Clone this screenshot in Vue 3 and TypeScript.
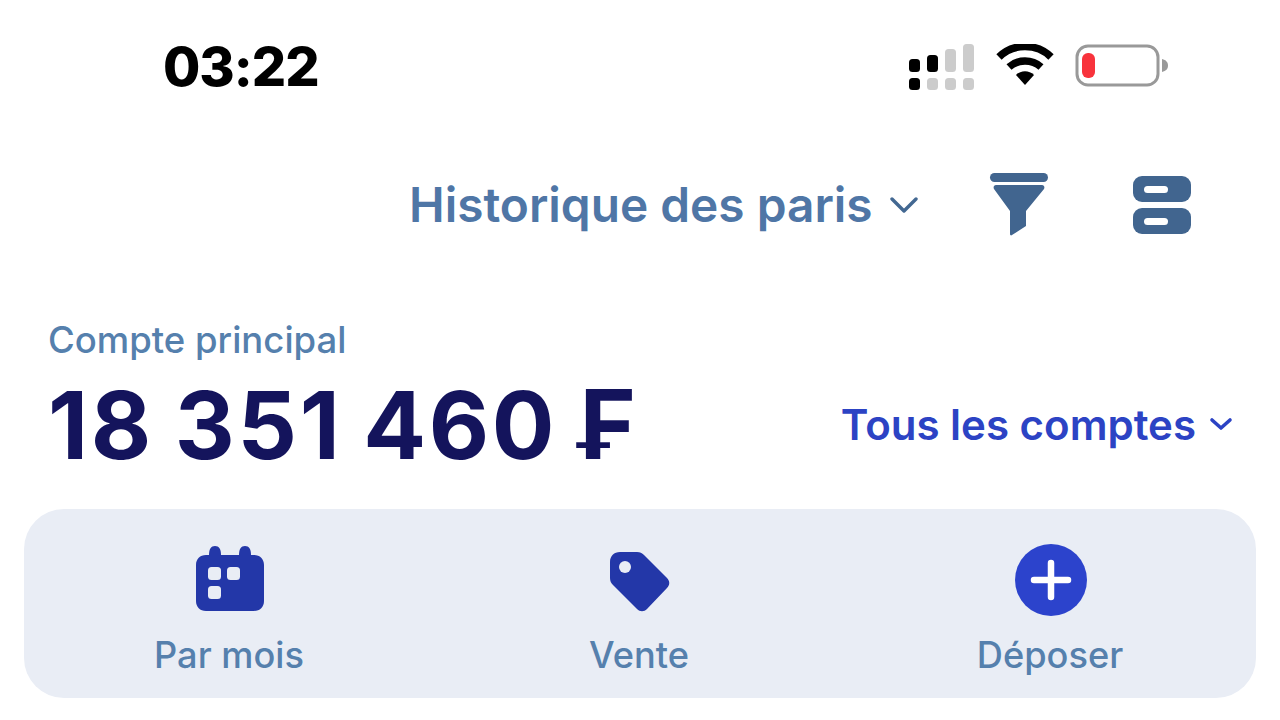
<template>
  <div class="screen">
    <header class="status-bar">
      <span class="clock">03:22</span>
      <div class="status-icons">
        <svg class="signal" width="66" height="46" viewBox="0 0 66 46">
          <rect x="1" y="15" width="11" height="13" rx="3.5" fill="#000" />
          <rect x="1" y="34" width="11" height="12" rx="3.5" fill="#000" />
          <rect x="19" y="11" width="11" height="17" rx="3.5" fill="#000" />
          <rect x="19" y="34" width="11" height="12" rx="3.5" fill="#ccc" />
          <rect x="37" y="5" width="11" height="23" rx="3.5" fill="#ccc" />
          <rect x="37" y="34" width="11" height="12" rx="3.5" fill="#ccc" />
          <rect x="55" y="0" width="11" height="28" rx="3.5" fill="#ccc" />
          <rect x="55" y="34" width="11" height="12" rx="3.5" fill="#ccc" />
        </svg>
        <svg class="wifi" width="58" height="42" viewBox="0 0 58 42">
          <path d="M3 13C17 -1 41 -1 55 13" fill="none" stroke="#000" stroke-width="7.5" stroke-linejoin="round" />
          <path d="M13 23C22 15 36 15 45 23" fill="none" stroke="#000" stroke-width="7.5" />
          <path d="M20 31C25 26 33 26 38 31L29 41Z" fill="#000" />
        </svg>
        <svg class="battery" width="94" height="44" viewBox="0 0 94 44">
          <rect x="2" y="2" width="81" height="39" rx="11" fill="#fff" stroke="#999" stroke-width="3" />
          <rect x="7" y="9" width="13" height="25" rx="6" fill="#f8333c" />
          <path d="M87 15C91 16 93 18 93 22C93 25 91 27 87 28Z" fill="#999" />
        </svg>
      </div>
    </header>

    <nav class="top-nav">
      <div class="history">
        <span>Historique des paris</span>
        <svg width="28" height="16" viewBox="0 0 28 16">
          <path d="M2 2L14 14L26 2" fill="none" stroke="#436892" stroke-width="3.4" stroke-linecap="round" stroke-linejoin="round" />
        </svg>
      </div>
      <svg class="funnel" width="60" height="64" viewBox="0 0 60 64">
        <rect x="1" y="0" width="58" height="9" rx="4.5" fill="#41658f" />
        <path d="M7 12H53C55 12 56 14 55 16L37 38V53L23 62C22 63 21 62 21 61V38L5 16C4 14 5 12 7 12Z" fill="#41658f" />
      </svg>
      <svg class="server" width="60" height="60" viewBox="0 0 60 60">
        <rect x="1" y="1" width="58" height="26" rx="9" fill="#41658f" />
        <rect x="12" y="11" width="24" height="7" rx="3.5" fill="#fff" />
        <rect x="1" y="33" width="58" height="26" rx="9" fill="#41658f" />
        <rect x="12" y="43" width="24" height="7" rx="3.5" fill="#fff" />
      </svg>
    </nav>

    <section class="balance">
      <div class="account-label">Compte principal</div>
      <div class="balance-row">
        <div class="amount"><span class="digits">18 351 460</span> <span class="currency">₣</span></div>
        <div class="accounts">
          <span>Tous les comptes</span>
          <svg width="24" height="14" viewBox="0 0 24 14">
            <path d="M3 3L12 11L21 3" fill="none" stroke="#2c43c4" stroke-width="3.6" stroke-linecap="round" stroke-linejoin="round" />
          </svg>
        </div>
      </div>
    </section>

    <section class="actions">
      <div class="action">
        <div class="action-icon">
          <svg class="calendar" width="68" height="65" viewBox="0 0 68 65">
            <path d="M19 0C23 0 25 3 25 9H43C43 3 45 0 49 0C53 0 55 3 55 9H58C64 9 68 13 68 19V55C68 61 64 65 58 65H10C4 65 0 61 0 55V19C0 13 4 9 10 9H13C13 3 15 0 19 0Z" fill="#2337a8" />
            <rect x="12" y="21" width="13" height="13" rx="3.5" fill="#e9edf5" />
            <rect x="31" y="21" width="13" height="13" rx="3.5" fill="#e9edf5" />
            <rect x="12" y="40" width="13" height="13" rx="3.5" fill="#e9edf5" />
          </svg>
        </div>
        <span>Par mois</span>
      </div>
      <div class="action">
        <div class="action-icon">
          <svg class="tag" width="60" height="60" viewBox="0 0 60 60">
            <path d="M10 0H27C30 0 32 1 34 3L57 26C60 29 60 33 57 36L37 57C34 60 30 60 27 57L3 33C1 31 0 29 0 26V10C0 4 4 0 10 0Z" fill="#2337a8" />
            <circle cx="15" cy="15" r="6" fill="#e9edf5" />
          </svg>
        </div>
        <span>Vente</span>
      </div>
      <div class="action">
        <div class="action-icon">
          <svg width="72" height="72" viewBox="0 0 72 72">
            <circle cx="36" cy="36" r="36" fill="#2c43cc" />
            <path d="M36 19V53M19 36H53" stroke="#fff" stroke-width="6.5" stroke-linecap="round" />
          </svg>
        </div>
        <span>Déposer</span>
      </div>
    </section>
  </div>
</template>

<script setup lang="ts">
</script>

<style>
html,
body {
  margin: 0;
  background: #fff;
}
</style>

<style scoped>
.screen {
  width: 1280px;
  height: 720px;
  overflow: hidden;
  background: #fff;
  font-family: Inter, 'Liberation Sans', sans-serif;
  display: flex;
  flex-direction: column;
}

.status-bar {
  flex: none;
  height: 132px;
  padding: 0 110px 0 163px;
  display: flex;
  justify-content: space-between;
  align-items: flex-start;
}

.clock {
  margin-top: 37px;
  font-size: 54px;
  line-height: 60px;
  font-weight: 800;
  letter-spacing: -1px;
  color: #000;
}

.status-icons {
  margin-top: 44px;
  display: flex;
  gap: 22px;
  align-items: flex-start;
}

.battery {
  margin-left: -1px;
  margin-right: 1px;
}

.top-nav {
  flex: none;
  height: 187px;
  padding: 41px 88px 0 409px;
  box-sizing: border-box;
  display: flex;
  align-items: flex-start;
}

.history {
  display: flex;
  align-items: center;
  gap: 17px;
  width: 509px;
  margin-right: 71px;
  height: 66px;
  margin-top: -1px;
  font-size: 47.8px;
  font-weight: 600;
  color: #4f76a6;
  white-space: nowrap;
}

.funnel {
  margin-right: 83px;
}

.server {
  margin-top: 2px;
}

.balance {
  flex: none;
  padding: 0 47px 0 48px;
}

.account-label {
  font-size: 36.5px;
  line-height: 42px;
  font-weight: 550;
  color: #5580ad;
}

.balance-row {
  display: flex;
  justify-content: space-between;
  align-items: center;
  height: 100px;
  margin-top: 13px;
}

.amount {
  font-size: 96px;
  line-height: 100px;
  font-weight: 700;
  word-spacing: -3px;
  color: #14145c;
  white-space: pre;
}

.digits {
  font-size: 93px;
  letter-spacing: 2.7px;
  word-spacing: -4px;
}

.currency {
  font-family: Inter, 'DejaVu Sans', sans-serif;
}

.accounts {
  display: flex;
  align-items: center;
  gap: 13px;
  font-size: 42px;
  font-weight: 600;
  color: #2c43c4;
}

.actions {
  flex: none;
  margin: 35px 24px 0;
  height: 189px;
  box-sizing: border-box;
  padding-top: 35px;
  border-radius: 40px;
  background: #e9edf5;
  display: grid;
  grid-template-columns: 410px 410px 412px;
}

.action {
  display: flex;
  flex-direction: column;
  align-items: center;
  height: 132px;
  font-size: 36.2px;
  font-weight: 550;
  color: #5580ad;
}

.action-icon {
  height: 72px;
  margin-left: 2px;
  display: flex;
  align-items: center;
}

.calendar {
  margin-top: -3px;
}

.tag {
  margin-top: 3px;
}

.action span {
  margin-top: 18px;
  line-height: 42px;
}
</style>
